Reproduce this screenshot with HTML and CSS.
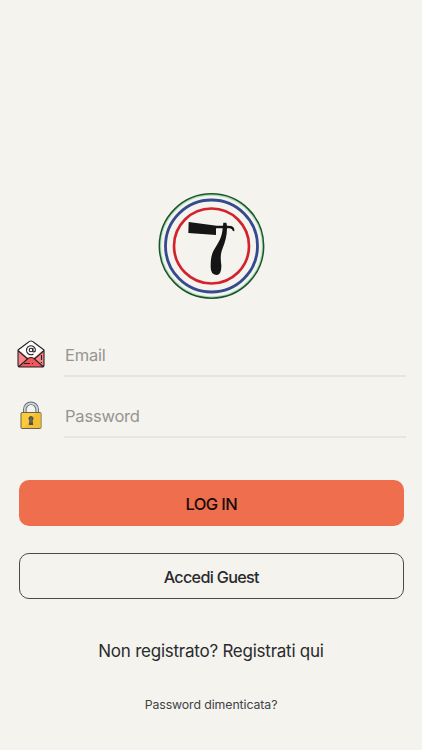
FILE: index.html
```
<!DOCTYPE html>
<html lang="it">
	<head>
		<meta charset="UTF-8">
		<meta content="width=device-width, initial-scale=1.0" name="viewport">
		<title>Login</title>
		<link rel="stylesheet" href="styles.css">
	</head>
	<body>
		<main class="login">
			<svg class="logo" viewBox="18 18 324 324">
				<circle cx="181.500" cy="180" r="153.500" fill="none" stroke="#a5e2b6" stroke-width="5"/>
				<circle cx="181.500" cy="180" r="156.500" fill="none" stroke="#20512e" stroke-width="4.500"/>
				<circle cx="181.500" cy="180" r="138" fill="none" stroke="#354b8d" stroke-width="8.500"/>
				<circle cx="181.500" cy="180" r="112.500" fill="none" stroke="#d3222d" stroke-width="8"/>
				<path fill="#151515" d="M113 108L197 119H216L217 110H226L228 119L241 120Q251 123 250 136L246 135Q243 127 236 127L228 127C228 150 222 170 215 187C207 207 209 220 211 238Q212 266 196 267Q179 266 179 243C179 219 181 204 191 188C204 168 213 153 215 127H195V147L112 141Z"/>
			</svg>
			<form class="form">
				<label class="field">
					<svg class="icon" viewBox="0 0 28 28">
						<path fill="#f78586" d="M1 10h26v17H1z"/>
						<path fill="#fffdfc" d="M1.500 10L11 2.500Q14 0 17 2.500L26.500 10 14 20z"/>
						<path fill="#f3555a" d="M2 27l9-8q3-3 6 0l9 8z"/>
						<path class="ink" d="M1 10L11 2.500Q14-.500 17 2.500L27 10v15q0 2-2 2H3q-2 0-2-2zM1.500 11l9 8M26.500 11l-9 8M2 26.500l9-8q3-2 6 0l9 8M7 23.500h6M15 23.500h1M24.500 15v5M24.500 22v1"/>
						<circle class="ink" cx="14" cy="10" r="1.800"/>
						<path class="ink" d="M15.900 8v3q0 1 1 1 1.700-.500 1.500-2.500A4.500 4.500 0 1 0 16.500 14"/>
					</svg>
					<input class="input" type="email" placeholder="Email">
				</label>
				<label class="field">
					<svg class="icon" viewBox="0 0 28 28">
						<path fill="none" stroke="#656c75" stroke-width="3.600" d="M7.800 12V8.500a6.200 6.200 0 0 1 12.400 0V12"/>
						<path fill="none" stroke="#cbd6df" stroke-width="1.700" d="M7.800 12V8.500a6.200 6.200 0 0 1 12.400 0V12"/>
						<rect x="4" y="11.500" width="20" height="16" rx="1" fill="#fccb3c" stroke="#68624f"/>
						<path fill="#f3bf32" d="M19 12h4.500v15H7z"/>
						<path fill="#555047" d="M14 15a2.600 2.600 0 0 1 1.600 4.600l.6 4.400h-4.400l.6-4.400A2.600 2.600 0 0 1 14 15z"/>
						<path stroke="#92826a" stroke-width=".8" d="M14 17v4.500"/>
					</svg>
					<input class="input" type="password" placeholder="Password">
				</label>
				<button class="btn btn-login" type="button">LOG IN</button>
				<button class="btn btn-guest" type="button">Accedi Guest</button>
			</form>
			<a class="register">Non registrato? Registrati qui</a>
			<a class="forgot">Password dimenticata?</a>
		</main>
	</body>
</html>
```
FILE: styles.css
```
* { box-sizing: border-box; }
body, html {
	margin: 0;
	height: 100%;
	background: #f4f3ee;
	color: #292a2d;
	font-family: Inter, "Liberation Sans", sans-serif;
}
.login {
	display: flex;
	flex-direction: column;
	align-items: center;
	padding-top: 192px;
}
.logo {
	display: block;
	width: 108px;
	height: 108px;
}
.form {
	display: flex;
	flex-direction: column;
	width: 100%;
	padding: 16px 16px 0;
}
.field {
	display: flex;
	align-items: flex-end;
	gap: 19.5px;
	height: 61px;
	padding-left: .5px;
}
.icon {
	flex: none;
	width: 28px;
	height: 28px;
	margin-bottom: 9px;
}
.ink {
	fill: none;
	stroke: #242224;
	stroke-width: 1.1;
	stroke-linejoin: round;
}
.input {
	flex: 1;
	min-width: 0;
	height: 44px;
	padding: 2px 1px 0;
	border: 0;
	border-bottom: 2px solid #e6e5e1;
	background: transparent;
	outline: none;
	font: 400 16.5px Inter, "Liberation Sans", sans-serif;
	letter-spacing: -.2px;
}
.input::placeholder { color: #96958f; }
.btn {
	height: 46px;
	margin: 0 2px 0 2.5px;
	padding: 1px 0 0;
	border: 0;
	border-radius: 10px;
	font: 500 16.5px Inter, "Liberation Sans", sans-serif;
	letter-spacing: -.6px;
}
.btn-login {
	margin-top: 42px;
	background: #ee6e4e;
	color: #160b08;
}
.btn-guest {
	margin-top: 27px;
	border: 1px solid #4b4b4c;
	background: transparent;
	color: #292a2d;
	font-size: 16.2px;
	letter-spacing: -.7px;
}
.register {
	margin-top: 41px;
	font-size: 17px;
	line-height: 22px;
	letter-spacing: -.24px;
}
.forgot {
	margin-top: 35px;
	color: #414246;
	font-size: 12.3px;
	line-height: 16px;
	letter-spacing: -.08px;
}
```
